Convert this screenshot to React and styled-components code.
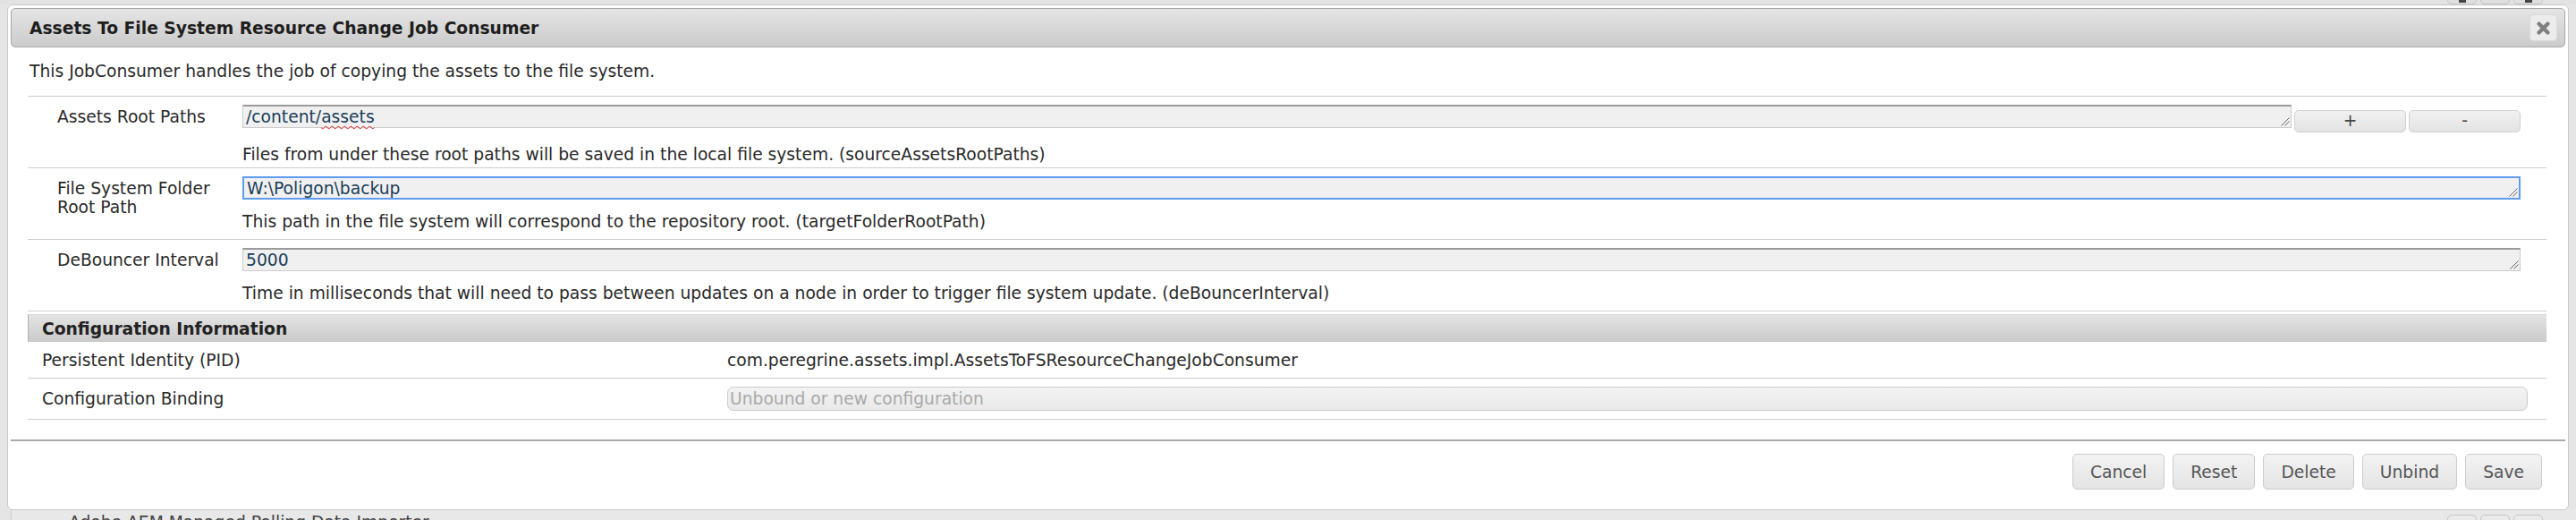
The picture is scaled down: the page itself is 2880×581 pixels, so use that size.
import React from "react";
import styled, { createGlobalStyle } from "styled-components";

const GlobalStyle = createGlobalStyle`
  html, body {
    margin: 0;
    padding: 0;
    background: #e5e5e5;
  }
  body {
    font-family: "DejaVu Sans", Verdana, sans-serif;
    font-size: 18.7px;
    color: #333;
  }
`;

const fields = [
  {
    label: "Assets Root Paths",
    value: "/content/",
    misspelt: "assets",
    help: "Files from under these root paths will be saved in the local file system. (sourceAssetsRootPaths)",
    multi: true,
  },
  {
    label: "File System Folder Root Path",
    value: "W:\\Poligon\\backup",
    help: "This path in the file system will correspond to the repository root. (targetFolderRootPath)",
    focused: true,
  },
  {
    label: "DeBouncer Interval",
    value: "5000",
    help: "Time in milliseconds that will need to pass between updates on a node in order to trigger file system update. (deBouncerInterval)",
  },
];

const actions = ["Cancel", "Reset", "Delete", "Unbind", "Save"];

const Page = styled.div`
  height: 581px;
  overflow: hidden;
  display: flex;
  flex-direction: column;
`;

const Strip = styled.div`
  height: ${({ $height }) => $height}px;
  flex: none;
  overflow: hidden;
  display: flex;
  align-items: ${({ $edge }) => ($edge === "top" ? "flex-end" : "flex-start")};
  justify-content: space-between;
  padding-right: 37px;
  border-left: ${({ $edge }) => ($edge === "bottom" ? "1px solid #cfcfcf" : "none")};
  margin-left: ${({ $edge }) => ($edge === "bottom" ? "12px" : "0")};
  padding-left: ${({ $edge }) => ($edge === "bottom" ? "64px" : "12px")};
  background: ${({ $edge }) => ($edge === "bottom" ? "#e8e8e8" : "#e2e2e2")};
`;

const RowText = styled.div`
  padding-top: 3px;
  line-height: 22px;
  color: #444;
  white-space: nowrap;
`;

const StubGroup = styled.div`
  display: flex;
  gap: 4px;
  padding-top: ${({ $edge }) => ($edge === "bottom" ? "5px" : "0")};
`;

const StubButton = styled.div`
  width: 33px;
  height: 24px;
  box-sizing: border-box;
  border: 1px solid #c4c4c4;
  border-radius: 5px;
  background: linear-gradient(#ececec, #dedede);
  display: flex;
  align-items: flex-end;
  justify-content: center;
  padding-bottom: 1px;

  span {
    width: 8px;
    height: 3px;
    background: ${({ $dark }) => ($dark ? "#444" : "transparent")};
  }
`;

const Dialog = styled.div`
  flex: none;
  height: 565px;
  box-sizing: border-box;
  margin: 0 8px;
  padding: 3px;
  background: #fff;
  border: 1px solid #cacaca;
  border-radius: 6px;
  display: flex;
  flex-direction: column;
`;

const TitleBar = styled.div`
  height: 44px;
  box-sizing: border-box;
  flex: none;
  display: flex;
  align-items: center;
  justify-content: space-between;
  padding: 0 8px 0 20px;
  border: 1px solid #a9a9a9;
  border-radius: 5px;
  background: linear-gradient(#e5e5e5, #cbcbcb);
`;

const Title = styled.div`
  font-weight: bold;
  color: #1e1e1e;
`;

const CloseButton = styled.div`
  width: 31px;
  height: 30px;
  box-sizing: border-box;
  border: 1px solid #dadada;
  border-radius: 4px;
  background: #ececec;
  display: flex;
  align-items: center;
  justify-content: center;
`;

const Body = styled.div`
  flex: 1;
  padding: 0 21px 0 19px;
`;

const Description = styled.div`
  padding: 16px 2px 16px;
  line-height: 22px;
  color: #2a2a2a;
`;

const FormTable = styled.div`
  border-top: 1px solid #cdcdcd;
`;

const FieldRow = styled.div`
  display: flex;
  border-bottom: 1px solid #cdcdcd;
  height: 80px;
  box-sizing: border-box;
`;

const FieldLabel = styled.div`
  width: 240px;
  flex: none;
  box-sizing: border-box;
  padding: 12px 8px 0 33px;
  line-height: 21px;
  color: #2a2a2a;
`;

const FieldCell = styled.div`
  flex: 1;
  padding: 9px 29px 0 0;
`;

const FieldLine = styled.div`
  display: flex;
  align-items: flex-start;
  gap: 3px;
`;

const TextBox = styled.div`
  flex: 1;
  position: relative;
  height: 26px;
  box-sizing: border-box;
  padding: 0 3px;
  line-height: 23px;
  color: #1b3e5a;
  background: #f0f0f0;
  border: ${({ $focused }) => ($focused ? "2px solid #5f9cf0" : "1px solid #cccccc")};
  border-top: 2px solid ${({ $focused }) => ($focused ? "#5f9cf0" : "#9a9a9a")};
  white-space: nowrap;
`;

const Misspelt = styled.span`
  text-decoration: underline wavy #e0201b;
  text-decoration-skip-ink: none;
  text-underline-offset: 3px;
  text-decoration-thickness: 1px;
`;

const Grip = styled.svg`
  position: absolute;
  right: 1px;
  bottom: 1px;
`;

const PlusMinus = styled.div`
  display: flex;
  gap: 3px;
  margin-top: 6px;
`;

const SmallButton = styled.div`
  width: 125px;
  height: 25px;
  box-sizing: border-box;
  border: 1px solid #d0d0d0;
  border-radius: 5px;
  background: linear-gradient(#f1f1f1, #e3e3e3);
  color: #444;
  display: flex;
  align-items: center;
  justify-content: center;
  line-height: 1;
`;

const Help = styled.div`
  margin-top: 14px;
  line-height: 22px;
  color: #2a2a2a;
  white-space: nowrap;
`;

const InfoTable = styled.div`
  margin-top: 3px;
`;

const InfoHeader = styled.div`
  height: 31px;
  box-sizing: border-box;
  padding-left: 15px;
  display: flex;
  align-items: center;
  font-weight: bold;
  color: #222;
  border-left: 1px solid #b0b0b0;
  border-top: 1px solid #d8d8d8;
  background: linear-gradient(#e3e3e3, #cacaca);
`;

const InfoRow = styled.div`
  display: flex;
  align-items: center;
  height: ${({ $height }) => $height}px;
  box-sizing: border-box;
  border-bottom: 1px solid #cdcdcd;
  color: #2a2a2a;
`;

const InfoLabel = styled.div`
  width: 782px;
  flex: none;
  box-sizing: border-box;
  padding-left: 16px;
`;

const InfoValue = styled.div`
  flex: 1;
  padding-right: 21px;
`;

const BindingBox = styled.div`
  height: 27px;
  box-sizing: border-box;
  border: 1px solid #cbcbcb;
  border-radius: 7px;
  background: linear-gradient(#f3f3f3, #e9e9e9);
  color: #a9a9a9;
  padding-left: 2px;
  line-height: 25px;
`;

const Footer = styled.div`
  flex: none;
  margin-top: 20px;
  border-top: 2px solid #a9a9a9;
  padding: 14px 26px 19px 0;
  display: flex;
  justify-content: flex-end;
  gap: 9px;
`;

const ActionButton = styled.div`
  height: 40px;
  box-sizing: border-box;
  padding: 0 19px;
  border: 1px solid #cccccc;
  border-radius: 5px;
  background: linear-gradient(#f3f3f3, #e4e4e4);
  color: #555;
  display: flex;
  align-items: center;
`;

const ResizeGrip = () => (
  <Grip width="10" height="10" viewBox="0 0 10 10">
    <path d="M9.5 0.5 L0.5 9.5 M9.5 4.5 L4.5 9.5" stroke="#555" strokeWidth="0.9" fill="none" />
  </Grip>
);

const CloseIcon = () => (
  <svg width="17" height="17" viewBox="0 0 17 17">
    <path d="M3.5 3.5 L13.5 13.5 M13.5 3.5 L3.5 13.5" stroke="#808080" strokeWidth="4.4" strokeLinecap="round" />
  </svg>
);

const Stubs = ({ edge }) => (
  <StubGroup $edge={edge}>
    <StubButton $dark={edge === "top"}>
      <span />
    </StubButton>
    <StubButton>
      <span />
    </StubButton>
    <StubButton $dark={edge === "top"}>
      <span />
    </StubButton>
  </StubGroup>
);

export default function App() {
  return (
    <>
      <GlobalStyle />
      <Page>
        <Strip $height={5} $edge="top">
          <span />
          <Stubs edge="top" />
        </Strip>

        <Dialog>
          <TitleBar>
            <Title>Assets To File System Resource Change Job Consumer</Title>
            <CloseButton>
              <CloseIcon />
            </CloseButton>
          </TitleBar>

          <Body>
            <Description>
              This JobConsumer handles the job of copying the assets to the file system.
            </Description>

            <FormTable>
              {fields.map((f) => (
                <FieldRow key={f.label}>
                  <FieldLabel>{f.label}</FieldLabel>
                  <FieldCell>
                    <FieldLine>
                      <TextBox $focused={f.focused}>
                        {f.value}
                        {f.misspelt && <Misspelt>{f.misspelt}</Misspelt>}
                        <ResizeGrip />
                      </TextBox>
                      {f.multi && (
                        <PlusMinus>
                          <SmallButton>+</SmallButton>
                          <SmallButton>-</SmallButton>
                        </PlusMinus>
                      )}
                    </FieldLine>
                    <Help>{f.help}</Help>
                  </FieldCell>
                </FieldRow>
              ))}
            </FormTable>

            <InfoTable>
              <InfoHeader>Configuration Information</InfoHeader>
              <InfoRow $height={41}>
                <InfoLabel>Persistent Identity (PID)</InfoLabel>
                <InfoValue>com.peregrine.assets.impl.AssetsToFSResourceChangeJobConsumer</InfoValue>
              </InfoRow>
              <InfoRow $height={46}>
                <InfoLabel>Configuration Binding</InfoLabel>
                <InfoValue>
                  <BindingBox>Unbound or new configuration</BindingBox>
                </InfoValue>
              </InfoRow>
            </InfoTable>
          </Body>

          <Footer>
            {actions.map((a) => (
              <ActionButton key={a}>{a}</ActionButton>
            ))}
          </Footer>
        </Dialog>

        <Strip $height={11} $edge="bottom">
          <RowText>Adobe AEM Managed Polling Data Importer</RowText>
          <Stubs edge="bottom" />
        </Strip>
      </Page>
    </>
  );
}
